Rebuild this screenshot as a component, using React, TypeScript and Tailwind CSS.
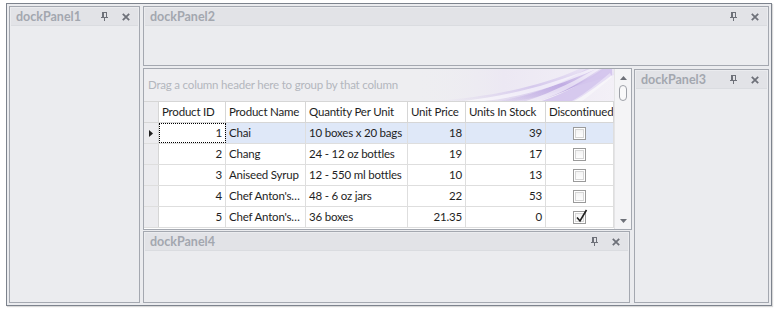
import React from "react";

const Pin = () => (
  <svg width="7" height="9" viewBox="0 0 7 9" shapeRendering="crispEdges">
    <rect x="1.5" y="0.5" width="4" height="5" fill="none" stroke="#6e7179" strokeWidth="1" />
    <rect x="1" y="0" width="2" height="6" fill="#6e7179" />
    <rect x="0" y="5" width="7" height="1" fill="#6e7179" />
    <rect x="3" y="6" width="1" height="3" fill="#6e7179" />
  </svg>
);

const Close = () => (
  <svg width="8" height="8" viewBox="0 0 8 8">
    <path d="M0.8 0.8L7.2 7.2M7.2 0.8L0.8 7.2" stroke="#6e7179" strokeWidth="1.8" />
  </svg>
);

function DockPanel({ title, className = "" }: { title: string; className?: string }) {
  return (
    <div className={`flex flex-col border border-[#a4a8b0] bg-[#ebecef] p-px ${className}`}>
      <div className="flex h-[18px] shrink-0 items-center border-b border-[#dadce0] bg-[#e2e3e7] pl-[5px] pr-[8px]">
        <span className="pt-px text-[12.5px] font-bold leading-none text-[#a3a7af]">{title}</span>
        <div className="ml-auto flex items-center gap-[14px]">
          <Pin />
          <Close />
        </div>
      </div>
    </div>
  );
}

const Check = ({ checked }: { checked: boolean }) => (
  <div className="relative h-[13px] w-[13px] border border-[#9a9a9a] bg-white p-px">
    <div className="h-full w-full border border-[#d6d6d6] bg-gradient-to-b from-[#f4f4f4] to-[#fdfdfd]" />
    {checked && (
      <svg className="absolute left-[1px] top-[-3px]" width="13" height="14" viewBox="0 0 13 14">
        <path d="M2 8.5L5 12L11.5 1" fill="none" stroke="#1f1f1f" strokeWidth="1.6" />
      </svg>
    )}
  </div>
);

const cols = [
  { name: "Product ID", w: "w-[67px]", right: true },
  { name: "Product Name", w: "w-[80px]", right: false },
  { name: "Quantity Per Unit", w: "w-[102px]", right: false },
  { name: "Unit Price", w: "w-[58px]", right: true },
  { name: "Units In Stock", w: "w-[80px]", right: true },
  { name: "Discontinued", w: "w-[68px]", right: false },
];

const rows = [
  ["1", "Chai", "10 boxes x 20 bags", "18", "39", false],
  ["2", "Chang", "24 - 12 oz bottles", "19", "17", false],
  ["3", "Aniseed Syrup", "12 - 550 ml bottles", "10", "13", false],
  ["4", "Chef Anton's…", "48 - 6 oz jars", "22", "53", false],
  ["5", "Chef Anton's…", "36 boxes", "21.35", "0", true],
] as const;

const txt = "text-[11.5px] tracking-[-0.2px] leading-none text-[#1e1e1e]";

function Swoosh() {
  return (
    <svg className="absolute right-0 top-0" width="200" height="32" viewBox="0 0 200 32">
      <defs>
        <linearGradient id="bgfade" x1="0" y1="0" x2="1" y2="0">
          <stop offset="0" stopColor="#eeeef1" stopOpacity="0" />
          <stop offset="0.45" stopColor="#ece8f3" />
          <stop offset="1" stopColor="#f3f0f7" />
        </linearGradient>
        <linearGradient id="g1" x1="0" y1="1" x2="1" y2="0">
          <stop offset="0" stopColor="#d8cceb" stopOpacity="0" />
          <stop offset="0.5" stopColor="#d3c6ec" />
          <stop offset="1" stopColor="#ece6f5" />
        </linearGradient>
        <linearGradient id="g2" x1="0" y1="1" x2="1" y2="0">
          <stop offset="0" stopColor="#c7b5e5" stopOpacity="0.2" />
          <stop offset="0.55" stopColor="#c0acE3" />
          <stop offset="1" stopColor="#e8e1f4" />
        </linearGradient>
      </defs>
      <rect width="200" height="32" fill="url(#bgfade)" />
      <path d="M20 32 C80 28 130 16 165 0 L200 0 L200 6 C160 18 120 30 100 32 Z" fill="url(#g1)" opacity="0.9" />
      <path d="M85 32 C120 26 150 14 172 0 L192 0 C168 16 140 28 122 32 Z" fill="url(#g2)" />
      <path d="M128 32 C152 24 172 12 188 0 L198 0 L198 6 C182 18 168 28 160 32 Z" fill="#d1c2ec" opacity="0.85" />
      <path d="M50 32 C100 26 140 14 176 0 L182 0 C146 16 110 28 70 32 Z" fill="#ffffff" opacity="0.6" />
      <path d="M112 32 C142 22 164 10 182 0 L186 0 C168 12 150 24 124 32 Z" fill="#ffffff" opacity="0.55" />
      <path d="M158 32 C172 24 184 14 196 4 L198 8 C186 18 176 26 168 32 Z" fill="#ffffff" opacity="0.4" />
    </svg>
  );
}

function Grid() {
  return (
    <div className="flex h-[162px] w-[489px] border border-[#a4a8b0] bg-white">
      <div className="flex w-[470px] flex-col">
        <div className="relative flex h-[33px] shrink-0 items-center overflow-hidden border-b border-[#d6d6d6] bg-[#eeeef1] pl-[4px]">
          <Swoosh />
          <span className="relative whitespace-nowrap text-[11.5px] leading-none tracking-[-0.2px] text-[#b3b6bd]">
            Drag a column header here to group by that column
          </span>
        </div>
        <div className="flex h-[21px] shrink-0 border-b border-[#d6d6d6]">
          <div className="w-[15px] border-r border-[#d6d6d6] bg-[#ececef]" />
          {cols.map((c) => (
            <div
              key={c.name}
              className={`${c.w} ${txt} flex items-center overflow-hidden whitespace-nowrap border-r border-[#d6d6d6] pl-[3px]`}
            >
              {c.name}
            </div>
          ))}
        </div>
        {rows.map((r, i) => {
          const sel = i === 0;
          return (
            <div key={i} className="flex h-[21px] shrink-0 border-b border-[#dedede]">
              <div className="flex w-[15px] items-center justify-center border-r border-[#d6d6d6] bg-[#ececef]">
                {sel && (
                  <svg width="4" height="7" viewBox="0 0 4 7">
                    <path d="M0 0L4 3.5L0 7Z" fill="#1e1e1e" />
                  </svg>
                )}
              </div>
              {cols.map((c, j) => {
                const v = r[j];
                const focus = sel && j === 0;
                const bg = sel && !focus ? "bg-[#dfe8f8]" : "bg-white";
                return (
                  <div
                    key={j}
                    className={`${c.w} ${bg} ${txt} flex items-center overflow-hidden whitespace-nowrap border-r border-[#dedede] ${
                      c.right ? "justify-end pr-[3px]" : j === 5 ? "justify-center" : "pl-[3px]"
                    } ${focus ? "outline-1 -outline-offset-1 outline-dotted outline-black" : ""}`}
                  >
                    {j === 5 ? <Check checked={v as boolean} /> : (v as string)}
                  </div>
                );
              })}
            </div>
          );
        })}
      </div>
      <div className="flex w-[17px] flex-col items-center border-l border-[#e4e4e6] bg-[#f4f4f6] pt-[7px]">
        <svg width="7" height="4" viewBox="0 0 7 4">
          <path d="M0 4L3.5 0L7 4Z" fill="#6e7179" />
        </svg>
        <div className="mt-[5px] h-[16px] w-[8px] rounded-[4px] border border-[#9ea1a8] bg-[#f9f9fa]" />
        <div className="mt-auto mb-[6px]">
          <svg width="7" height="4" viewBox="0 0 7 4">
            <path d="M0 0L3.5 4L7 0Z" fill="#6e7179" />
          </svg>
        </div>
      </div>
    </div>
  );
}

export default function App() {
  return (
    <div className="h-[314px] w-[778px] bg-white pl-[6px] pt-[3px] font-['Lato',sans-serif]">
      <div className="flex h-[303px] w-[766px] gap-[3px] border border-[#7d838d] bg-[#ebecef] p-[2px] shadow-[1px_1px_1px_rgba(0,0,0,0.15)]">
        <DockPanel title="dockPanel1" className="h-full w-[131px] shrink-0" />
        <div className="flex flex-1 flex-col gap-[2px]">
          <DockPanel title="dockPanel2" className="h-[60px] shrink-0" />
          <div className="flex flex-1 gap-[2px]">
            <div className="flex w-[489px] flex-col gap-[1px]">
              <Grid />
              <DockPanel title="dockPanel4" className="mr-[2px] flex-1" />
            </div>
            <DockPanel title="dockPanel3" className="mt-px flex-1" />
          </div>
        </div>
      </div>
    </div>
  );
}
